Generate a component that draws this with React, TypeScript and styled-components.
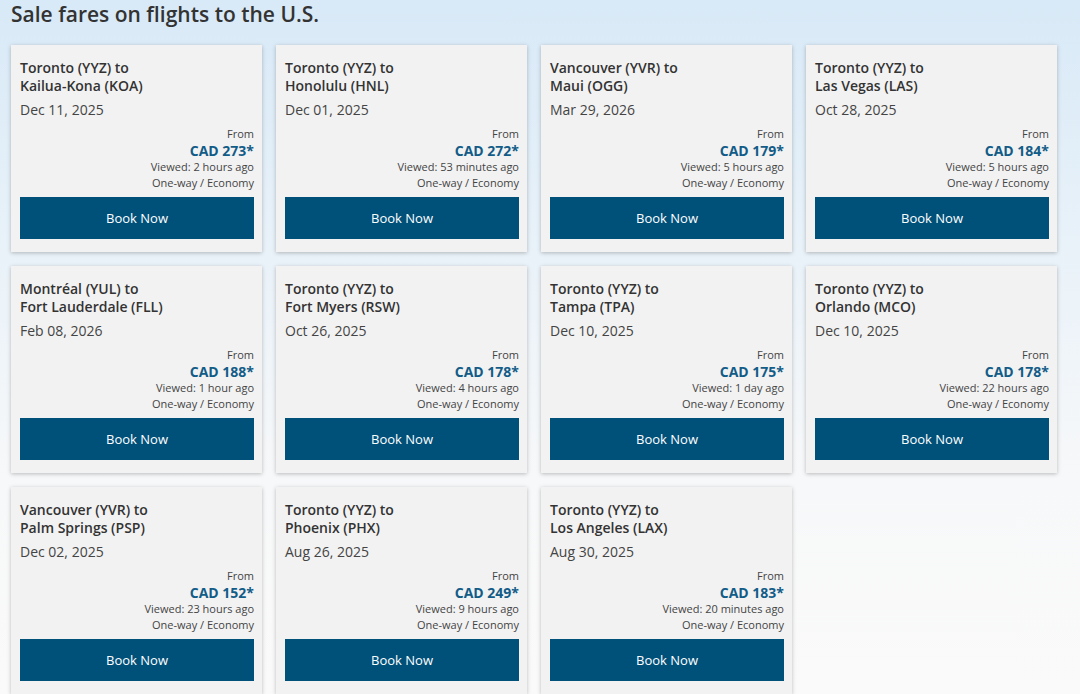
import styled, { createGlobalStyle } from 'styled-components';

type Fare = {
  from: string;
  to: string;
  date: string;
  price: number;
  viewed: string;
};

const fares: Fare[] = [
  { from: 'Toronto (YYZ)', to: 'Kailua-Kona (KOA)', date: 'Dec 11, 2025', price: 273, viewed: '2 hours ago' },
  { from: 'Toronto (YYZ)', to: 'Honolulu (HNL)', date: 'Dec 01, 2025', price: 272, viewed: '53 minutes ago' },
  { from: 'Vancouver (YVR)', to: 'Maui (OGG)', date: 'Mar 29, 2026', price: 179, viewed: '5 hours ago' },
  { from: 'Toronto (YYZ)', to: 'Las Vegas (LAS)', date: 'Oct 28, 2025', price: 184, viewed: '5 hours ago' },
  { from: 'Montréal (YUL)', to: 'Fort Lauderdale (FLL)', date: 'Feb 08, 2026', price: 188, viewed: '1 hour ago' },
  { from: 'Toronto (YYZ)', to: 'Fort Myers (RSW)', date: 'Oct 26, 2025', price: 178, viewed: '4 hours ago' },
  { from: 'Toronto (YYZ)', to: 'Tampa (TPA)', date: 'Dec 10, 2025', price: 175, viewed: '1 day ago' },
  { from: 'Toronto (YYZ)', to: 'Orlando (MCO)', date: 'Dec 10, 2025', price: 178, viewed: '22 hours ago' },
  { from: 'Vancouver (YVR)', to: 'Palm Springs (PSP)', date: 'Dec 02, 2025', price: 152, viewed: '23 hours ago' },
  { from: 'Toronto (YYZ)', to: 'Phoenix (PHX)', date: 'Aug 26, 2025', price: 249, viewed: '9 hours ago' },
  { from: 'Toronto (YYZ)', to: 'Los Angeles (LAX)', date: 'Aug 30, 2025', price: 183, viewed: '20 minutes ago' },
];

export default function App() {
  return (
    <>
      <GlobalStyle />
      <Page>
        <Heading>Sale fares on flights to the U.S.</Heading>
        <Grid>
          {fares.map((f) => (
            <Card key={f.to}>
              <Route>
                {f.from} to
                <br />
                {f.to}
              </Route>
              <DateText>{f.date}</DateText>
              <PriceBlock>
                <Small>From</Small>
                <Price>CAD {f.price}*</Price>
                <Small>Viewed: {f.viewed}</Small>
                <Small>One-way / Economy</Small>
              </PriceBlock>
              <BookButton type="button">Book Now</BookButton>
            </Card>
          ))}
        </Grid>
      </Page>
    </>
  );
}

const GlobalStyle = createGlobalStyle`
  html, body {
    margin: 0;
    padding: 0;
  }
  body {
    font-family: "Open Sans", "Noto Sans", sans-serif;
    color: #333;
    background: #fafafa;
  }
`;

const Page = styled.div`
  min-height: 694px;
  padding: 0 11px;
  background: linear-gradient(to bottom, #d8e9f7 0px, #e9f2f9 250px, #f7f8f9 480px, #fafafa 694px);
  box-sizing: border-box;
`;

const Heading = styled.h1`
  margin: 0 0 17px;
  font-size: 21px;
  line-height: 28px;
  font-weight: 600;
  color: #333;
`;

const Grid = styled.div`
  display: grid;
  grid-template-columns: repeat(4, 251px);
  column-gap: 14px;
  row-gap: 14px;
`;

const Card = styled.div`
  display: flex;
  flex-direction: column;
  height: 207px;
  box-sizing: border-box;
  padding: 14px 8px 13px 9px;
  background: #f2f2f2;
  box-shadow: 0 1px 4px rgba(0, 0, 0, 0.25);
`;

const Route = styled.div`
  font-size: 14px;
  line-height: 18px;
  font-weight: 600;
  color: #333;
`;

const DateText = styled.div`
  margin-top: 5px;
  font-size: 14px;
  line-height: 20px;
  color: #444;
`;

const PriceBlock = styled.div`
  display: flex;
  flex-direction: column;
  align-items: flex-end;
  margin-top: 6px;
`;

const Small = styled.div`
  font-size: 11px;
  line-height: 16px;
  color: #444;
`;

const Price = styled.div`
  font-size: 14px;
  line-height: 17px;
  font-weight: 700;
  color: #125c88;
`;

const BookButton = styled.button`
  margin-top: auto;
  height: 42px;
  width: 100%;
  border: none;
  background: #00517a;
  color: #fff;
  font-family: "Open Sans", "Noto Sans", sans-serif;
  font-size: 13px;
  cursor: pointer;
`;
